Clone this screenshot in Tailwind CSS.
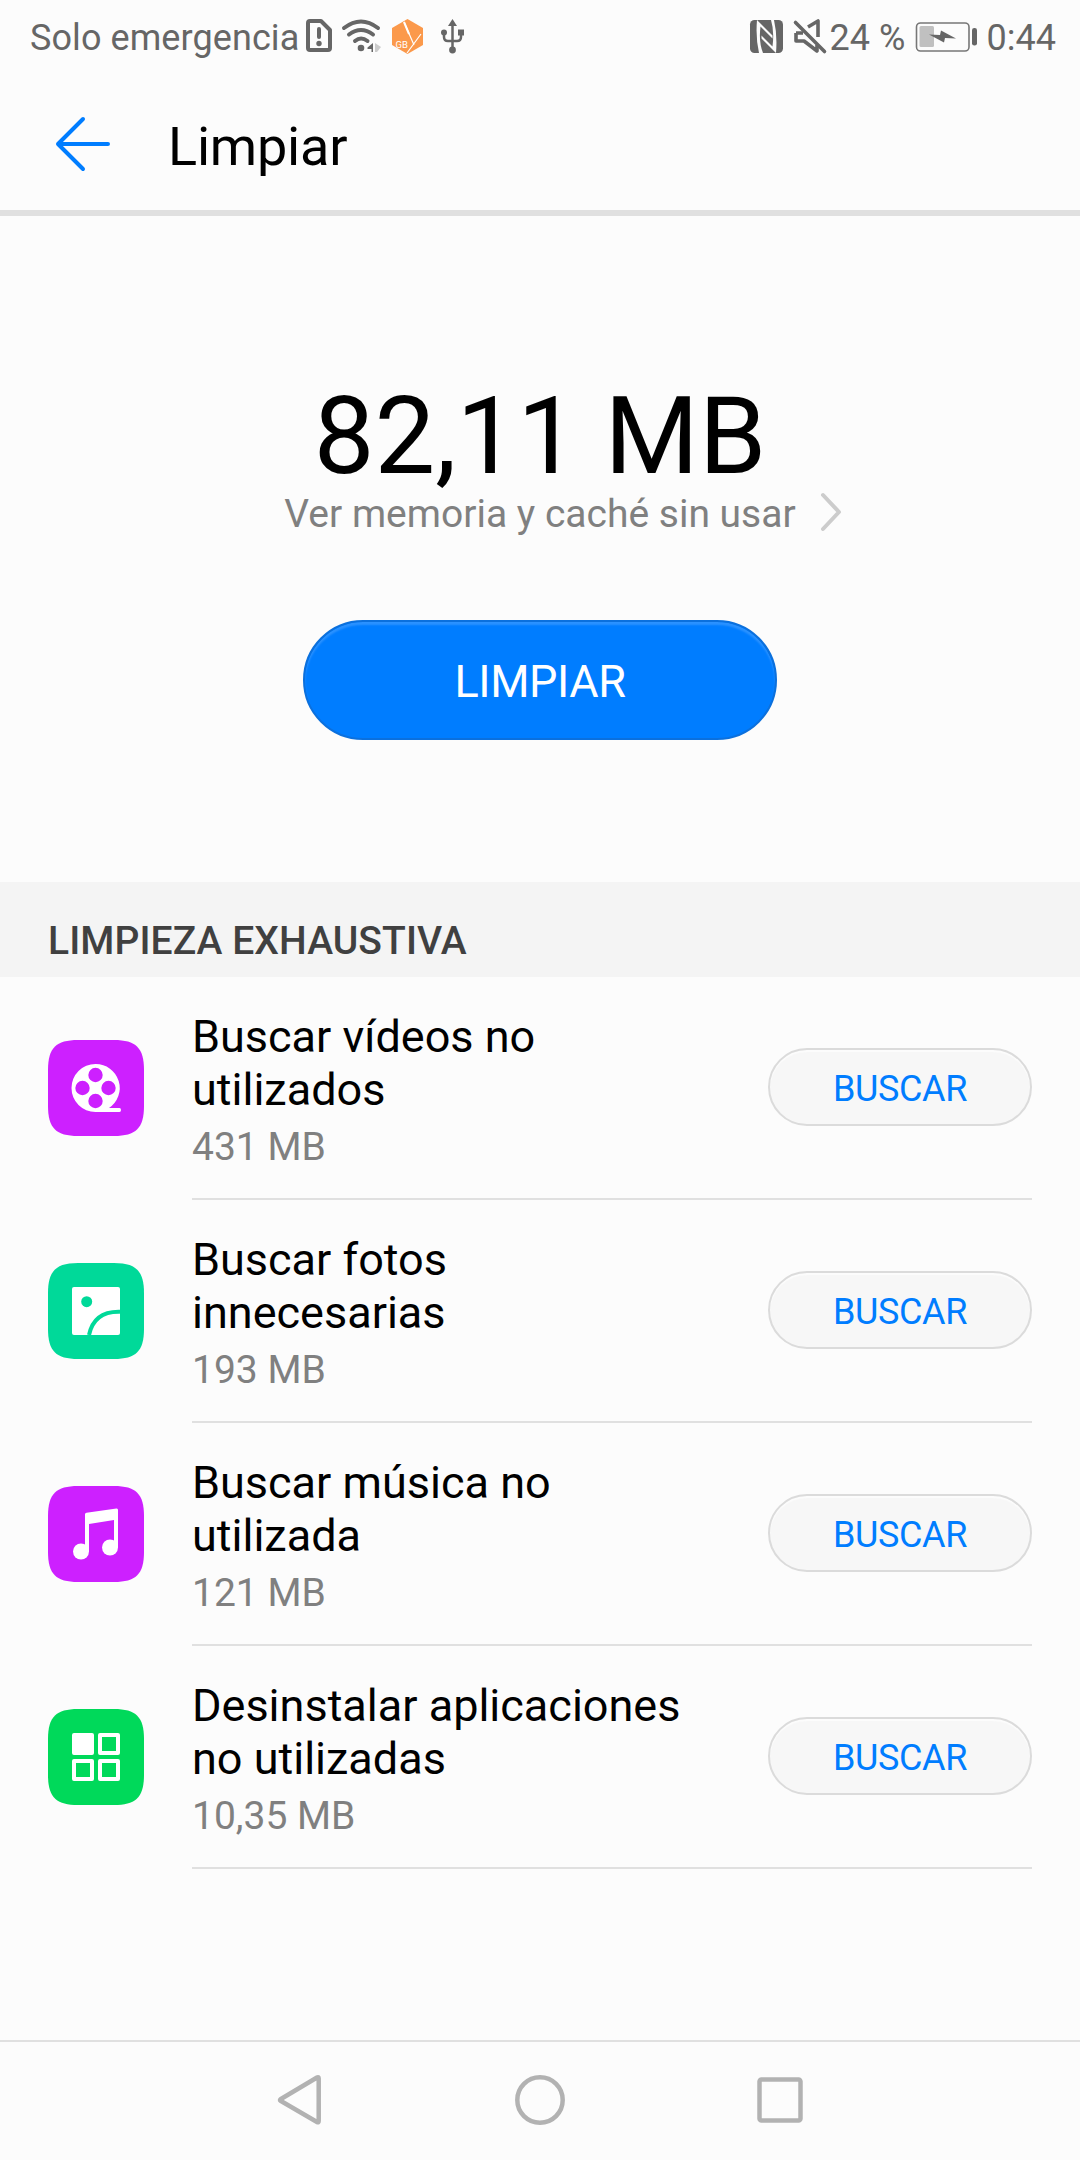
<!DOCTYPE html>
<html lang="es">
<head>
<meta charset="utf-8">
<title>Limpiar</title>
<script src="https://cdn.jsdelivr.net/npm/@tailwindcss/browser@4"></script>
</head>
<body class="bg-[#fcfcfc]">
<div class="flex h-[2160px] w-[1080px] flex-col overflow-hidden bg-[#fcfcfc] font-['Roboto',sans-serif] text-black">

  <!-- Status bar -->
  <header class="flex h-[72px] shrink-0 items-center justify-between pl-[30px] pr-[24px] text-[36px] leading-[42px] text-[#666]">
    <div class="flex items-center">
      <span class="w-[270px] pt-[3px] tracking-[0.08px] whitespace-nowrap">Solo emergencia</span>
      <svg class="h-[72px] w-[180px]" viewBox="300 0 180 72" fill="none" stroke="#666">
        <path d="M310 21h11l9 9v18q0 2-2 2h-18q-2 0-2-2v-25q0-2 2-2z" stroke-width="4" stroke-linejoin="round"/>
        <path d="M319 29v8" stroke-width="4" stroke-linecap="round"/><circle cx="319" cy="43.500" r="2.700" fill="#666" stroke="none"/>
        <g stroke-width="4" stroke-linecap="round"><path d="M344 28q17-13 34 0"/><path d="M349 34.500q12-9 24 0"/><path d="M355 41q6-5 12.500 0"/></g>
        <circle cx="361" cy="48" r="3.300" fill="#666" stroke="none"/>
        <path d="M373 43v9h-1.500v-3h-4v-1.500z" fill="#666" stroke="none"/>
        <path d="M375 43v9h2l4-5-3-2z" fill="#ccc" stroke="none"/>
        <path d="M407.500 19l15.500 9v17l-15.500 9-15.500-9v-17z" fill="#fb994b" stroke="none"/>
        <path d="M404 22l10 23M421 34l-14 19" stroke="#fff" stroke-width="1.200"/><path d="M404 22l5 12" stroke="#fff" stroke-width="2"/>
        <text x="395.500" y="48" font-family="Roboto" font-size="9.500" fill="#fff" stroke="none">GB</text>
        <path d="M452.500 25v24M444 33v4q0 4 4 4h9q4 0 4-4v-4" stroke-width="2.500"/>
        <path d="M452.500 19l4.500 7h-9z" fill="#666" stroke="none"/><circle cx="444" cy="32.500" r="3" fill="#666" stroke="none"/><path d="M458 29.500h6v6h-6z" fill="#666" stroke="none"/><circle cx="452.500" cy="50" r="3.400" fill="#666" stroke="none"/>
      </svg>
    </div>
    <div class="flex items-center">
      <svg class="h-[72px] w-[82px]" viewBox="748 0 82 72" fill="none">
        <rect x="750" y="20" width="33" height="33" rx="4.500" fill="#666"/>
        <g fill="#fcfcfc"><path d="M757 20L772.500 35.500V38.500L760.500 26.500Q758.500 42 763 53H759Q755.500 38 757 20z"/><path d="M776 53L761.500 38.500V35.500L772.500 46.500Q774.500 31 771 20H774Q777.500 35 776 53z"/></g>
        <g stroke="#666" stroke-width="3.600" stroke-linejoin="round"><path d="M796 33v8h8l13 10v-6M796 33h7"/><path d="M808 27l10-6v16"/><path d="M795.500 22.500l29 29" stroke-linecap="round"/></g>
      </svg>
      <span class="w-[84px] pt-[3px] whitespace-nowrap">24 %</span>
      <svg class="h-[72px] w-[73px]" viewBox="914 0 73 72">
        <rect x="916.500" y="23" width="52.500" height="28" rx="4" fill="none" stroke="#777" stroke-width="1.600"/>
        <rect x="919.500" y="26" width="14.500" height="21" rx="1.500" fill="#c0c0c0"/>
        <path d="M929 34.500l11 .500 1-4.500 15 8-11-.500-1 4.500z" fill="#666"/>
        <rect x="972" y="28" width="5" height="17.500" rx="2.300" fill="#666"/>
      </svg>
      <span class="pt-[3px] whitespace-nowrap">0:44</span>
    </div>
  </header>

  <!-- App bar -->
  <div class="flex h-[144px] shrink-0 items-center border-b-[6px] border-[#e0e0e0] pl-[54px]">
    <svg class="mt-[6px] h-[60px] w-[60px]" viewBox="54 111 60 60" fill="none" stroke="#007dff" stroke-width="4" stroke-linecap="round" stroke-linejoin="round"><path d="M83 116L58 141l25 25M58 141h50"/></svg>
    <h1 class="mt-[12px] ml-[54px] text-[54px] leading-[64px] tracking-[-0.2px]">Limpiar</h1>
  </div>

  <!-- Summary -->
  <section class="flex h-[666px] shrink-0 flex-col items-center pt-[166px]">
    <div class="text-[108px] leading-[108px]">82,11 MB</div>
    <div class="mt-px flex h-[46px] items-center pl-[48px]">
      <span class="text-[39px] leading-[46px] text-[#808080]">Ver memoria y caché sin usar</span>
      <svg class="ml-[24px] mt-[-4px] h-[40px] w-[24px]" viewBox="0 0 24 40" fill="none" stroke="#ccc" stroke-width="4" stroke-linecap="round" stroke-linejoin="round"><path d="M3 3l16 17-16 17"/></svg>
    </div>
    <button class="mt-[83px] h-[120px] w-[474px] rounded-full border-2 border-[#0b70dd] bg-[#007dff] pt-[3px] text-[45px] leading-[53px] tracking-[-0.4px] text-white shadow-[inset_0_3px_2px_#2b92ff]">LIMPIAR</button>
  </section>

  <!-- Deep clean -->
  <h2 class="h-[95px] shrink-0 bg-[#f4f4f4] pt-[36px] pl-[48px] text-[39px] leading-[46px] font-medium tracking-[0.08px] text-[#404040]">LIMPIEZA EXHAUSTIVA</h2>
  <ul class="flex flex-1 flex-col pl-[48px] pr-[48px]">
    <li class="flex h-[223px]">
      <svg class="mt-[63px] size-[96px]" viewBox="0 0 96 96"><path d="M0 30C0 8 8 0 30 0h36c22 0 30 8 30 30v36c0 22-8 30-30 30H30C8 96 0 88 0 66z" fill="#cd20ff"/>
        <path d="M47.500 24a24 24 0 0 1 13.500 44h10.500q1.500 0 1.500 2t-1.500 2H47.500a24 24 0 0 1 0-48z" fill="#fff"/><g fill="#cd20ff"><circle cx="47.500" cy="35" r="7.200"/><circle cx="47.500" cy="61" r="7.200"/><circle cx="34.500" cy="48" r="7.200"/><circle cx="60.500" cy="48" r="7.200"/></g></svg>
      <div class="ml-[48px] flex flex-1 border-b-2 border-[#e0e0e0]">
        <div class="flex-1 pt-[33px]"><p class="text-[45px] leading-[53px]">Buscar vídeos no<br>utilizados</p><p class="mt-[8px] text-[39px] leading-[46px] text-[#808080]">431 MB</p></div>
        <button class="mt-[71px] h-[78px] w-[264px] rounded-full border-2 border-[#dbdbdb] bg-[#f7f7f7] pt-[3px] text-[36px] leading-[42px] tracking-[-0.4px] text-[#007dff] shadow-[inset_0_2px_1px_#fcfcfc]">BUSCAR</button>
      </div>
    </li>
    <li class="flex h-[223px]">
      <svg class="mt-[63px] size-[96px]" viewBox="0 0 96 96"><path d="M0 30C0 8 8 0 30 0h36c22 0 30 8 30 30v36c0 22-8 30-30 30H30C8 96 0 88 0 66z" fill="#00d999"/>
        <rect x="24" y="24" width="48" height="48" rx="2" fill="#fff"/><circle cx="38.700" cy="38.700" r="5.500" fill="#00d999"/><path d="M72 48.700Q46 48 41 72" fill="none" stroke="#00d999" stroke-width="4"/></svg>
      <div class="ml-[48px] flex flex-1 border-b-2 border-[#e0e0e0]">
        <div class="flex-1 pt-[33px]"><p class="text-[45px] leading-[53px]">Buscar fotos<br>innecesarias</p><p class="mt-[8px] text-[39px] leading-[46px] text-[#808080]">193 MB</p></div>
        <button class="mt-[71px] h-[78px] w-[264px] rounded-full border-2 border-[#dbdbdb] bg-[#f7f7f7] pt-[3px] text-[36px] leading-[42px] tracking-[-0.4px] text-[#007dff] shadow-[inset_0_2px_1px_#fcfcfc]">BUSCAR</button>
      </div>
    </li>
    <li class="flex h-[223px]">
      <svg class="mt-[63px] size-[96px]" viewBox="0 0 96 96"><path d="M0 30C0 8 8 0 30 0h36c22 0 30 8 30 30v36c0 22-8 30-30 30H30C8 96 0 88 0 66z" fill="#cd20ff"/>
        <g fill="#fff"><circle cx="33" cy="65.500" r="8"/><circle cx="62" cy="61.500" r="8"/><path d="M37 28.500q0-1.500 1.500-1.700l30-4.300q1.500-.200 1.500 1.500V61.500h-4V34L41 38v27.500h-4z"/></g></svg>
      <div class="ml-[48px] flex flex-1 border-b-2 border-[#e0e0e0]">
        <div class="flex-1 pt-[33px]"><p class="text-[45px] leading-[53px]">Buscar música no<br>utilizada</p><p class="mt-[8px] text-[39px] leading-[46px] text-[#808080]">121 MB</p></div>
        <button class="mt-[71px] h-[78px] w-[264px] rounded-full border-2 border-[#dbdbdb] bg-[#f7f7f7] pt-[3px] text-[36px] leading-[42px] tracking-[-0.4px] text-[#007dff] shadow-[inset_0_2px_1px_#fcfcfc]">BUSCAR</button>
      </div>
    </li>
    <li class="flex h-[223px]">
      <svg class="mt-[63px] size-[96px]" viewBox="0 0 96 96"><path d="M0 30C0 8 8 0 30 0h36c22 0 30 8 30 30v36c0 22-8 30-30 30H30C8 96 0 88 0 66z" fill="#00d95a"/>
        <g fill="none" stroke="#fff" stroke-width="4" stroke-linejoin="round"><path d="M26 26h18v18H26z" fill="#fff"/><path d="M52 26h18v18H52zM26 52h18v18H26zM52 52h18v18H52z"/></g></svg>
      <div class="ml-[48px] flex flex-1 border-b-2 border-[#e0e0e0]">
        <div class="flex-1 pt-[33px]"><p class="text-[45px] leading-[53px]">Desinstalar aplicaciones<br>no utilizadas</p><p class="mt-[8px] text-[39px] leading-[46px] text-[#808080]">10,35 MB</p></div>
        <button class="mt-[71px] h-[78px] w-[264px] rounded-full border-2 border-[#dbdbdb] bg-[#f7f7f7] pt-[3px] text-[36px] leading-[42px] tracking-[-0.4px] text-[#007dff] shadow-[inset_0_2px_1px_#fcfcfc]">BUSCAR</button>
      </div>
    </li>
  </ul>

  <!-- Navigation bar -->
  <nav class="flex h-[120px] shrink-0 items-center justify-center gap-[180px] border-t-2 border-[#e0e0e0] text-[#b2b2b2]">
    <svg class="size-[60px]" viewBox="0 0 60 60" fill="none" stroke="currentColor" stroke-width="4.500" stroke-linejoin="round"><path d="M10.500 29.800q-1-.800 0-1.600L47 6.500q1.700-1 1.700 1V50q0 2-1.700 1z"/></svg>
    <svg class="size-[60px]" viewBox="0 0 60 60" fill="none" stroke="currentColor" stroke-width="4.500"><circle cx="30" cy="29" r="22.700"/></svg>
    <svg class="size-[60px]" viewBox="0 0 60 60" fill="none" stroke="currentColor" stroke-width="4.500"><rect x="9.500" y="8.500" width="41" height="41" rx="2"/></svg>
  </nav>
</div>
</body>
</html>
